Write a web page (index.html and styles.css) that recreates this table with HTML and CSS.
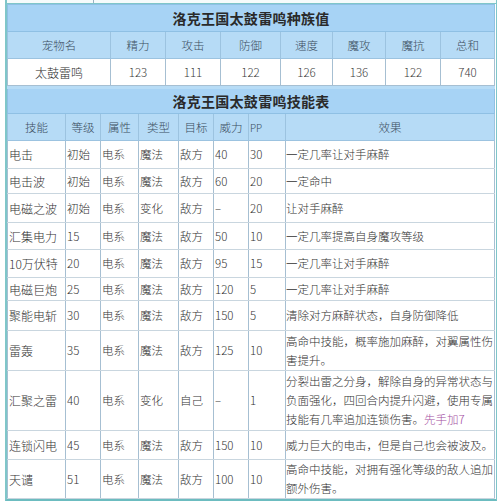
FILE: index.html
```html
<!DOCTYPE html>
<html lang="zh">
<head>
<meta charset="utf-8">
<title>洛克王国太鼓雷鸣</title>
<link rel="stylesheet" href="styles.css">
</head>
<body>
<div class="frame">
  <div class="prev"><div class="prev-cell"></div><div class="prev-rest"></div></div>
  <table class="stats">
    <colgroup>
      <col class="w103"><col class="w55"><col class="w55"><col class="w60"><col class="w52"><col class="w53"><col class="w55"><col class="w54">
    </colgroup>
    <tr class="title"><th colspan="8">洛克王国太鼓雷鸣种族值</th></tr>
    <tr class="head"><th>宠物名</th><th>精力</th><th>攻击</th><th>防御</th><th>速度</th><th>魔攻</th><th>魔抗</th><th>总和</th></tr>
    <tr class="data"><td>太鼓雷鸣</td><td>123</td><td>111</td><td>122</td><td>126</td><td>136</td><td>122</td><td>740</td></tr>
  </table>
  <table class="skills">
    <colgroup>
      <col class="w58"><col class="w35"><col class="w38"><col class="w40"><col class="w35"><col class="w35"><col class="w37"><col class="w209">
    </colgroup>
    <tr class="title"><th colspan="8">洛克王国太鼓雷鸣技能表</th></tr>
    <tr class="head"><th>技能</th><th>等级</th><th>属性</th><th>类型</th><th>目标</th><th>威力</th><th class="pp">PP</th><th>效果</th></tr>
    <tr class="h28"><td>电击</td><td>初始</td><td>电系</td><td>魔法</td><td>敌方</td><td>40</td><td>30</td><td>一定几率让对手麻醉</td></tr>
    <tr class="h25"><td>电击波</td><td>初始</td><td>电系</td><td>魔法</td><td>敌方</td><td>60</td><td>20</td><td>一定命中</td></tr>
    <tr class="h29"><td>电磁之波</td><td>初始</td><td>电系</td><td>变化</td><td>敌方</td><td>–</td><td>20</td><td>让对手麻醉</td></tr>
    <tr class="h27"><td>汇集电力</td><td>15</td><td>电系</td><td>魔法</td><td>敌方</td><td>50</td><td>10</td><td>一定几率提高自身魔攻等级</td></tr>
    <tr class="h28"><td>10万伏特</td><td>20</td><td>电系</td><td>魔法</td><td>敌方</td><td>95</td><td>15</td><td>一定几率让对手麻醉</td></tr>
    <tr class="h23"><td>电磁巨炮</td><td>25</td><td>电系</td><td>魔法</td><td>敌方</td><td>120</td><td>5</td><td>一定几率让对手麻醉</td></tr>
    <tr class="h30"><td>聚能电斩</td><td>30</td><td>电系</td><td>魔法</td><td>敌方</td><td>150</td><td>5</td><td>清除对方麻醉状态，自身防御降低</td></tr>
    <tr class="h40"><td>雷轰</td><td>35</td><td>电系</td><td>魔法</td><td>敌方</td><td>125</td><td>10</td><td>高命中技能，概率施加麻醉，对翼属性伤<br>害提升。</td></tr>
    <tr class="h60"><td>汇聚之雷</td><td>40</td><td>电系</td><td>变化</td><td>自己</td><td>–</td><td>1</td><td>分裂出雷之分身，解除自身的异常状态与<br>负面强化，四回合内提升闪避，使用专属<br>技能有几率追加连锁伤害。<span class="hint">先手加7</span></td></tr>
    <tr class="h29"><td>连锁闪电</td><td>45</td><td>电系</td><td>魔法</td><td>敌方</td><td>150</td><td>10</td><td>威力巨大的电击，但是自己也会被波及。</td></tr>
    <tr class="h38"><td>天谴</td><td>51</td><td>电系</td><td>魔法</td><td>敌方</td><td>100</td><td>10</td><td>高命中技能，对拥有强化等级的敌人追加<br>额外伤害。</td></tr>
  </table>
</div>
</body>
</html>
```
FILE: styles.css
```css
html, body {
  margin: 0;
  padding: 0;
  background: #ffffff;
}
body {
  font-family: "Noto Sans CJK SC", "DejaVu Sans", sans-serif;
  color: #333333;
}
.frame {
  margin-left: 5px;
  width: 489px;
  border-left: 2px solid #7fc6c9;
  border-right: 1px solid #7fc6c9;
  border-bottom: 2px solid #6cbcc0;
}
.prev {
  display: flex;
  height: 3px;
  border-bottom: 1px solid #7fc6c9;
  background: #f6fbfb;
}
.prev-cell {
  width: 86px;
  border-right: 1px solid #9ab2c4;
}
.prev-rest {
  flex: 1;
}
table {
  border-collapse: collapse;
  table-layout: fixed;
  width: 488px;
  font-size: 11.5px;
  font-weight: 300;
}
th, td {
  border: 1px solid #a6bfd2;
  padding: 0;
  overflow: hidden;
  white-space: nowrap;
}
.w103 { width: 103px; }
.w55 { width: 55px; }
.w60 { width: 60px; }
.w52 { width: 52px; }
.w53 { width: 53px; }
.w54 { width: 54px; }
.w58 { width: 58px; }
.w35 { width: 35px; }
.w38 { width: 38px; }
.w40 { width: 40px; }
.w37 { width: 37px; }
.w209 { width: 209px; }
.title th {
  background: #a7d3f5;
  font-size: 14px;
  font-weight: bold;
  color: #2a2a2a;
  height: 26px;
  border-color: #8fc0e4;
  letter-spacing: 0.3px;
}
.head th {
  background: #b6dbf6;
  font-weight: 300;
  color: #3b4d60;
  height: 26px;
  text-align: center;
  border-color: #9cc3e0;
}
.head .pp {
  text-align: left;
  padding-left: 1px;
  font-size: 10px;
}
.stats .data td {
  height: 26px;
  text-align: center;
  background: #ffffff;
  color: #3a3a3a;
}
.stats .data td:first-child {
  font-size: 12px;
  color: #2a2a2a;
}
.skills .title th {
  border-top: 3px solid #b7dcf6;
  height: 24px;
}
.skills td {
  text-align: left;
  padding-left: 1px;
  line-height: 19px;
  vertical-align: middle;
  border-top-color: #c9d6df;
  border-bottom-color: #c9d6df;
  color: #333333;
}
.skills td:first-child {
  font-size: 12px;
}
.skills td:last-child {
  padding-left: 0;
}
.hint {
  color: #a44ea2;
}
.h23 td { height: 22px; }
.h25 td { height: 24px; }
.h27 td { height: 26px; }
.h28 td { height: 27px; }
.h29 td { height: 28px; }
.h30 td { height: 29px; }
.h38 td { height: 37px; }
.h40 td { height: 39px; }
.h60 td { height: 59px; }
```
